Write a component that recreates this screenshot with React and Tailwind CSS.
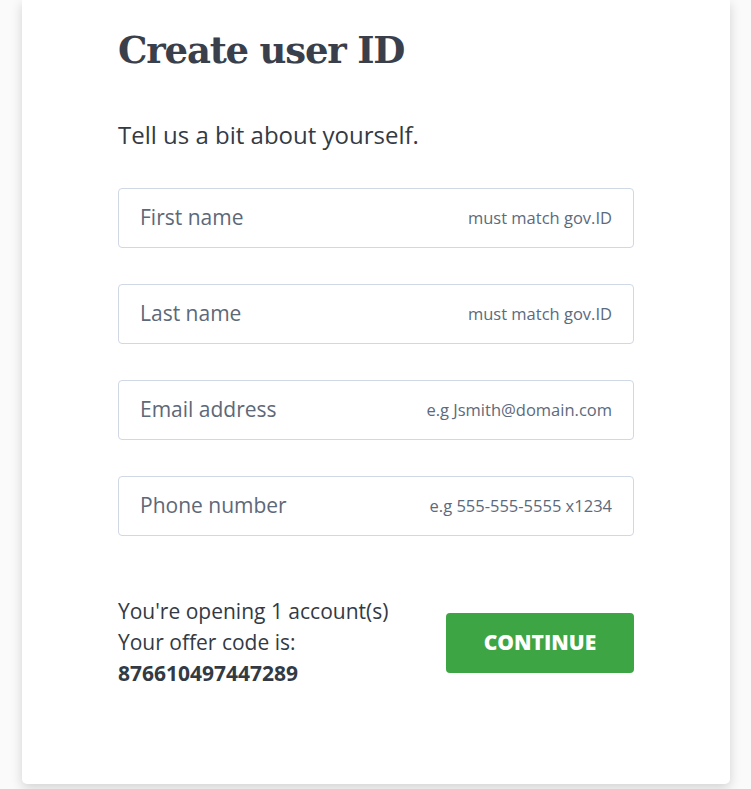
import React from "react";

const fields = [
  { label: "First name", hint: "must match gov.ID" },
  { label: "Last name", hint: "must match gov.ID" },
  { label: "Email address", hint: "e.g Jsmith@domain.com" },
  { label: "Phone number", hint: "e.g 555-555-5555 x1234" },
];

function Field({ label, hint }) {
  return (
    <div className="flex items-center justify-between h-[60px] px-[21px] border border-[#cfd8e3] rounded-[4px] bg-white">
      <span className="text-[21px] text-[#5d6878]">{label}</span>
      <span className="text-[16.5px] text-[#5b6a7d]">{hint}</span>
    </div>
  );
}

export default function App() {
  return (
    <div
      className="min-h-screen bg-[#fafafa] overflow-hidden"
      style={{ fontFamily: '"Open Sans", "Noto Sans", sans-serif' }}
    >
      <div className="ml-[22px] w-[708px] h-[784px] bg-white rounded-b-[5px] shadow-[0_4px_12px_rgba(0,0,0,0.16)] pl-[96px] pt-[22px]">
        <div className="w-[516px]">
          <h1
            className="text-[37px] leading-[56px] font-bold tracking-[-1.2px] text-[#3a404b]"
            style={{ fontFamily: '"DejaVu Serif", serif' }}
          >
            Create user ID
          </h1>
          <p className="mt-[42px] text-[24px] leading-[30px] text-[#333a44]">
            Tell us a bit about yourself.
          </p>
          <div className="mt-[38px] flex flex-col gap-[36px]">
            {fields.map((f) => (
              <Field key={f.label} label={f.label} hint={f.hint} />
            ))}
          </div>
          <div className="mt-[60px] flex items-center justify-between">
            <div className="text-[21px] leading-[31px] text-[#333a44]">
              <p>You're opening 1 account(s)</p>
              <p>Your offer code is:</p>
              <p className="font-bold">876610497447289</p>
            </div>
            <button className="w-[188px] h-[60px] rounded-[4px] bg-[#3ea545] text-white text-[21px] font-extrabold">
              CONTINUE
            </button>
          </div>
        </div>
      </div>
    </div>
  );
}
